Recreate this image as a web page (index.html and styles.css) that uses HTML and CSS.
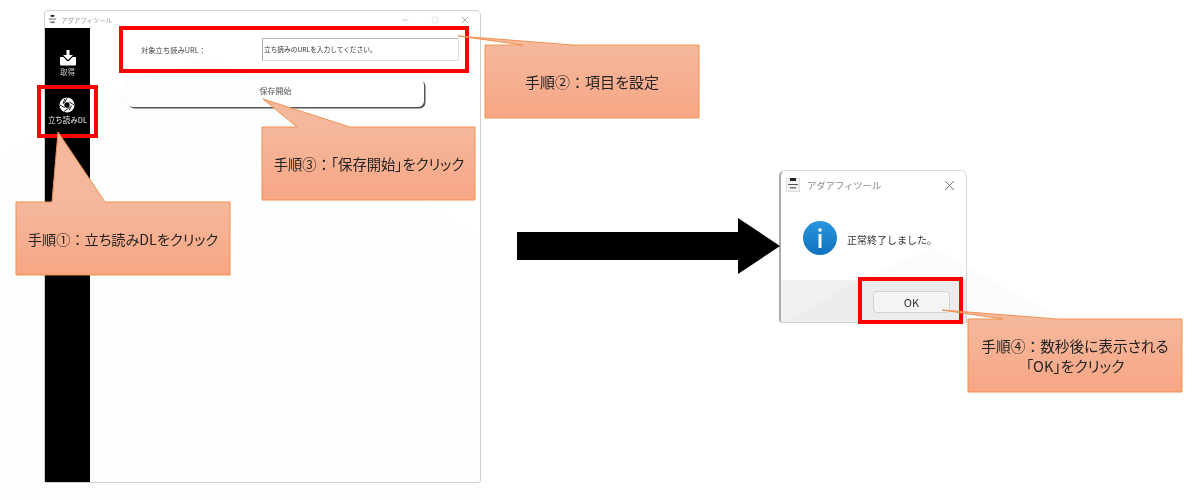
FILE: index.html
```html
<!DOCTYPE html>
<html lang="ja">
<head>
<meta charset="utf-8">
<title>アダアフィツール 手順</title>
<link rel="stylesheet" href="styles.css">
</head>
<body>
<div class="canvas">
  <section class="window main-window">
    <header class="titlebar">
      <svg class="app-icon" viewBox="0 0 10 10"><rect x="3" y="0" width="4" height="2" fill="#222"/><rect x="1" y="4" width="8" height="1" fill="#555"/><rect x="2.500" y="7" width="5" height="2" fill="#777"/></svg>
      <span class="title">アダアフィツール</span>
      <span class="controls">
        <svg class="ctl" viewBox="0 0 10 10"><path d="M1 5h8" stroke="#bbb" fill="none"/></svg>
        <svg class="ctl" viewBox="0 0 10 10"><rect x="1.500" y="1.500" width="7" height="7" stroke="#e4e4e4" fill="none"/></svg>
        <svg class="ctl" viewBox="0 0 10 10"><path d="M1 1l8 8M9 1l-8 8" stroke="#999" fill="none"/></svg>
      </span>
    </header>
    <div class="window-body">
      <nav class="sidebar">
        <div class="nav-item nav-get">
          <svg class="nav-icon" viewBox="0 0 16 16"><path d="M6.500 0h3v5H13L8 10 3 5h3.500z" fill="#fff"/><path d="M0 7h3.500l3.500 4h2l3.500-4H16v7.500a1 1 0 0 1-1 1H1a1 1 0 0 1-1-1z" fill="#fff"/></svg>
          <span>取得</span>
        </div>
        <div class="nav-item nav-dl">
          <svg class="nav-icon" viewBox="0 0 18 18"><circle cx="9" cy="9" r="8.500" fill="#fff"/><g stroke="#000" stroke-width="1" fill="none"><path d="M6 6.500L9.500.5"/><path d="M11.500 5.500L17 9"/><path d="M14 9.500L11.500 15"/><path d="M12 11.500L5.500 16.500"/><path d="M6.500 12L1 9"/><path d="M4.500 8L6.500 2"/></g><circle cx="9" cy="9" r="3" fill="#000"/></svg>
          <span>立ち読みDL</span>
        </div>
      </nav>
      <main class="content">
        <div class="form-row">
          <label class="form-label">対象立ち読みURL：</label>
          <div class="url-input">立ち読みのURLを入力してください。</div>
        </div>
        <div class="save-btn">保存開始</div>
      </main>
    </div>
  </section>

  <section class="window dialog">
    <header class="dialog-title">
      <svg class="dialog-app-icon" viewBox="0 0 14 14"><rect x=".5" y=".5" width="13" height="13" fill="#f4f4f4" stroke="#ddd"/><rect x="4" y="0" width="6" height="3" fill="#222"/><rect x="2" y="6" width="10" height="1" fill="#555"/><rect x="4" y="9" width="6" height="1.500" fill="#777"/></svg>
      <span class="dialog-name">アダアフィツール</span>
      <svg class="dialog-close" viewBox="0 0 12 12"><path d="M1 1l10 10M11 1L1 11" stroke="#666" fill="none"/></svg>
    </header>
    <div class="dialog-body">
      <svg class="info-icon" viewBox="0 0 34 34"><defs><linearGradient id="info" x1="0" y1="0" x2="0" y2="1"><stop offset="0" stop-color="#2a97dd"/><stop offset="1" stop-color="#0f6fbd"/></linearGradient></defs><circle cx="17" cy="17" r="17" fill="url(#info)"/><rect x="15.500" y="7.500" width="3" height="3" fill="#fff"/><rect x="15.500" y="13" width="3" height="14" fill="#fff"/></svg>
      <span class="dialog-msg">正常終了しました。</span>
    </div>
    <footer class="dialog-foot"><div class="ok-btn">OK</div></footer>
  </section>

  <svg class="watermark" viewBox="0 0 1200 500"><path d="M0 155L35 140 75 120 120 90 207 55 300 100 345 150 480 240V500H0z" fill="#fcfdfd"/><path d="M780 325L860 280 933 248 1000 285 1075 325z" fill="#fafbfb"/></svg>

  <div class="redbox red-form"></div>
  <div class="redbox red-nav"></div>
  <div class="redbox red-ok"></div>

  <svg class="arrow" viewBox="0 0 263 56"><path d="M0 14H221V0L263 28 221 56V42H0z" fill="#000"/></svg>

  <svg class="callout-shapes" viewBox="0 0 1200 500">
    <defs>
      <linearGradient id="g1" gradientUnits="userSpaceOnUse" x1="0" y1="202" x2="0" y2="275"><stop offset="0" stop-color="#f5b89d"/><stop offset="1" stop-color="#f7a684"/></linearGradient>
      <linearGradient id="g2" gradientUnits="userSpaceOnUse" x1="0" y1="45" x2="0" y2="118"><stop offset="0" stop-color="#f5b89d"/><stop offset="1" stop-color="#f7a684"/></linearGradient>
      <linearGradient id="g3" gradientUnits="userSpaceOnUse" x1="0" y1="127" x2="0" y2="200"><stop offset="0" stop-color="#f5b89d"/><stop offset="1" stop-color="#f7a684"/></linearGradient>
      <linearGradient id="g4" gradientUnits="userSpaceOnUse" x1="0" y1="319" x2="0" y2="392"><stop offset="0" stop-color="#f5b89d"/><stop offset="1" stop-color="#f7a684"/></linearGradient>
    </defs>
    <path class="shape" fill="url(#g1)" d="M16 202H52L58 132 105 202H230V275H16z"/>
    <path class="shape" fill="url(#g2)" d="M485 45H523L458 36 573 45H699V118H485z"/>
    <path class="shape" fill="url(#g3)" d="M262 127H297L263 99 350 127H475V200H262z"/>
    <path class="shape" fill="url(#g4)" d="M968 319H1003L942 310 1057 319H1182V392H968z"/>
  </svg>

  <div class="callout-text c1"><span>手順①<span class="colon">：</span>立ち読みDLをクリック</span></div>
  <div class="callout-text c2"><span>手順②<span class="colon">：</span>項目を設定</span></div>
  <div class="callout-text c3"><span>手順③<span class="colon">：</span>「保存開始」をクリック</span></div>
  <div class="callout-text c4"><span>手順④<span class="colon">：</span>数秒後に表示される<br>「OK」をクリック</span></div>
</div>
</body>
</html>
```
FILE: styles.css
```css
* { box-sizing: border-box; }
html, body { margin: 0; padding: 0; background: #fff; }
body { font-family: "Noto Sans CJK JP", "Noto Sans", sans-serif; color: #333; }
.canvas { position: relative; width: 1200px; height: 500px; overflow: hidden; background: #fff; }

.window { position: absolute; display: flex; flex-direction: column; background: #fff; }

.main-window { left: 44px; top: 10px; width: 437px; height: 473px; border: 1px solid #cfcfcf; border-radius: 3px 5px 3px 3px; }
.titlebar { height: 17px; display: flex; align-items: center; padding-left: 3px; flex: none; }
.app-icon { width: 9px; height: 9px; margin-right: 4px; }
.title { font-size: 6.5px; color: #999; letter-spacing: -.1px; }
.controls { margin-left: auto; display: flex; gap: 22px; padding-right: 11px; }
.ctl { width: 8px; height: 8px; display: block; }

.window-body { flex: 1; display: flex; min-height: 0; }
.sidebar { width: 46px; background: #000; display: flex; flex-direction: column; align-items: center; color: #eee; font-size: 7.500px; }
.nav-item { display: flex; flex-direction: column; align-items: center; white-space: nowrap; line-height: 10px; }
.nav-get { padding-top: 22px; gap: 1px; color: #ccc; }
.nav-dl { padding-top: 20px; gap: 2px; }
.nav-icon { width: 16px; height: 16px; display: block; }

.content { flex: 1; padding: 10px 21px 0 37px; }
.form-row { display: flex; align-items: center; height: 23px; padding-left: 14px; }
.form-label { width: 121px; font-size: 7.300px; color: #444; white-space: nowrap; }
.url-input { width: 197px; height: 23px; flex: none; border: 1px solid #e0e0e0; border-left-color: #aaa; border-top-color: #bbb; padding-left: 1px; font-size: 6.700px; line-height: 21px; color: #333; white-space: nowrap; }
.save-btn { width: 297px; height: 28px; margin-top: 18px; padding-bottom: 5px; border-radius: 6px; box-shadow: 1.500px 1.500px 0 #555, 0 0 1px #ddd; background: #fff; display: flex; align-items: center; justify-content: center; font-size: 8px; color: #555; }

.dialog { left: 779px; top: 170px; width: 188px; height: 153px; border: 1px solid #d8d8d8; border-left: 2px solid #aaa; border-radius: 6px 6px 0 4px; overflow: hidden; }
.dialog-title { height: 28px; display: flex; align-items: center; padding: 0 11px 0 5px; flex: none; }
.dialog-app-icon { width: 14px; height: 14px; margin-right: 7px; }
.dialog-name { font-size: 9.300px; color: #888; }
.dialog-close { width: 11px; height: 11px; margin-left: auto; }
.dialog-body { flex: 1; display: flex; align-items: center; padding: 0 0 3px 22px; gap: 10px; }
.info-icon { width: 34px; height: 34px; flex: none; }
.dialog-msg { font-size: 10px; padding-top: 3px; color: #333; white-space: nowrap; }
.dialog-foot { height: 42px; flex: none; background: #f0f0f0; display: flex; align-items: center; justify-content: flex-end; padding: 2px 16px 0 0; }
.ok-btn { width: 77px; height: 22px; background: #f8f8f8; border: 1px solid #d4d4d4; border-radius: 4px; font-size: 11px; color: #333; display: flex; align-items: center; justify-content: center; }

.watermark { position: absolute; left: 0; top: 0; width: 1200px; height: 500px; mix-blend-mode: multiply; pointer-events: none; }

.redbox { position: absolute; border: 4px solid #f00; }
.red-form { left: 119px; top: 26px; width: 350px; height: 47px; }
.red-nav { left: 37px; top: 85px; width: 61px; height: 53px; }
.red-ok { left: 858px; top: 277px; width: 105px; height: 47px; }

.arrow { position: absolute; left: 517px; top: 218px; width: 263px; height: 56px; }

.callout-shapes { position: absolute; left: 0; top: 0; width: 1200px; height: 500px; pointer-events: none; }
.shape { stroke: #f0914f; stroke-width: 1; }

.callout-text { position: absolute; display: flex; align-items: center; justify-content: center; text-align: center; font-size: 15px; font-feature-settings: "palt"; line-height: 20px; color: #222; white-space: nowrap; width: 214px; height: 73px; }
.colon { font-feature-settings: normal; }
.c1 { left: 16px; top: 202px; font-size: 14.200px; }
.c2 { left: 485px; top: 45px; }
.c3 { left: 262px; top: 127px; font-size: 14.300px; }
.c4 { left: 968px; top: 319px; font-size: 14.700px; }
```
